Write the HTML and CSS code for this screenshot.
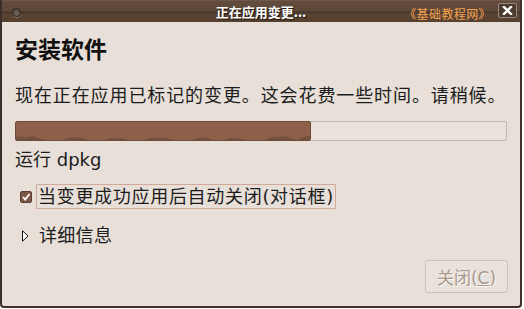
FILE: index.html
```html
<!DOCTYPE html>
<html lang="zh-CN">
<head>
<meta charset="utf-8">
<link rel="stylesheet" href="styles.css">
</head>
<body>
<div class="window">
  <div class="titlebar">
    <div class="tb-left"><span class="tb-circle"></span></div>
    <div class="tb-title">正在应用变更...</div>
    <div class="tb-right">
      <span class="tb-mark">《基础教程网》</span>
      <span class="tb-close"><svg width="11" height="9" viewBox="0 0 11 9"><path d="M2 1 L9 8 M9 1 L2 8" stroke="#fff" stroke-width="2.4" stroke-linecap="square"/></svg></span>
    </div>
  </div>
  <div class="content">
    <h1 class="heading">安装软件</h1>
    <p class="desc">现在正在应用已标记的变更。这会花费一些时间。请稍候。</p>
    <div class="progress">
      <div class="fill" style="width:60%">
        <svg class="bumps" viewBox="0 0 295 5" preserveAspectRatio="none"><path d="M0 5 L0 2 L5 1.5 L10 2.5 L18 1 L22 3 L30 5 L48 5 L52 3 L58 2 L66 2.5 L72 5 L90 5 L95 3 L108 3.5 L112 5 L130 5 L134 3 L150 2.8 L156 5 L178 5 L182 3 L192 2.5 L196 5 L210 5 L214 3 L225 3.5 L230 5 L250 5 L255 2.5 L262 2 L270 1 L275 3 L282 5 L288 2 L295 1 L295 5 Z" fill="#74503f"/></svg>
      </div>
    </div>
    <div class="status">运行 dpkg</div>
    <div class="check">
      <span class="box"><svg width="10" height="10" viewBox="0 0 10 10"><path d="M2 5 L4.2 7.5 L8.5 2" fill="none" stroke="#fff" stroke-width="1.8"/></svg></span>
      <span class="check-label">当变更成功应用后自动关闭(对话框)</span>
    </div>
    <div class="expander">
      <svg class="tri" width="7" height="12" viewBox="0 0 7 12"><path d="M0.5 0.8 L6 6 L0.5 11.2 Z" fill="#fff" stroke="#111" stroke-width="1"/></svg>
      <span>详细信息</span>
    </div>
    <div class="actions">
      <button class="btn" disabled>关闭(<u>C</u>)</button>
    </div>
  </div>
</div>
</body>
</html>
```
FILE: styles.css
```css
html, body {
  margin: 0;
  padding: 0;
  background: #ffffff;
}
body {
  font-family: "DejaVu Sans", "Noto Sans CJK SC", sans-serif;
  color: #1c1c1c;
}
.window {
  width: 518px;
  height: 306px;
  border-left: 2px solid #3d3029;
  border-right: 2px solid #3d3029;
  border-bottom: 2px solid #3d3029;
  border-radius: 0 0 4px 4px;
  background: #e7dfd8;
  display: flex;
  flex-direction: column;
  overflow: hidden;
}
.titlebar {
  height: 22px;
  margin: 0 -2px;
  background: linear-gradient(#7a6354 0px, #634c3e 1px, #5d4739 11px, #46352c 12px, #4a382e 13px, #584335 14px, #56412f 22px);
  display: grid;
  grid-template-columns: 1fr auto 1fr;
  align-items: center;
  flex: none;
}
.tb-left {
  display: flex;
  align-items: center;
  padding-left: 12px;
  padding-top: 3px;
}
.tb-circle {
  width: 7px;
  height: 7px;
  border-radius: 50%;
  border: 1px solid #2e241e;
  background: radial-gradient(circle at 50% 70%, #7a6a60, #4a3b32);
  box-shadow: 0 1px 0 #8a7264;
}
.tb-title {
  font-family: "Noto Sans CJK SC", sans-serif;
  font-weight: bold;
  font-size: 13px;
  line-height: 16px;
  color: #ffffff;
  text-shadow: 1px 1px 1px #1a120e;
  padding-top: 1px;
}
.tb-right {
  display: flex;
  justify-content: flex-end;
  align-items: center;
  gap: 7px;
  padding-right: 5px;
}
.tb-mark {
  font-family: "Noto Sans CJK SC", sans-serif;
  font-size: 12px;
  letter-spacing: 0.4px;
  line-height: 14px;
  color: #f7a34f;
  padding-top: 5px;
}
.tb-close {
  width: 17px;
  height: 13px;
  border: 1px solid #9a887d;
  border-radius: 2px;
  background: #4b3a30;
  display: flex;
  align-items: center;
  justify-content: center;
  margin-top: -1px;
}
.content {
  flex: 1;
  display: flex;
  flex-direction: column;
  padding: 0 13px;
}
.heading {
  margin: 12px 0 0;
  font-family: "Noto Sans CJK SC", sans-serif;
  font-size: 23px;
  line-height: 28px;
  font-weight: bold;
  color: #111;
}
.desc {
  margin: 22px 0 0;
  font-size: 18px;
  letter-spacing: 0.9px;
  line-height: 24px;
}
.progress {
  margin-top: 13px;
  height: 18px;
  border: 1px solid #c3b5ab;
  border-radius: 2px;
  background: #e9e1da;
}
.fill {
  height: 100%;
  margin: -1px;
  border: 1px solid #6e4b3a;
  border-radius: 2px;
  background: #8f6049;
  display: flex;
  flex-direction: column;
  justify-content: flex-end;
}
.bumps {
  display: block;
  width: 100%;
  height: 5px;
}
.status {
  margin-top: 7px;
  font-size: 18px;
  line-height: 24px;
}
.check {
  margin-top: 12px;
  display: flex;
  align-items: center;
  gap: 4px;
  padding-left: 5px;
}
.box {
  width: 10px;
  height: 10px;
  border: 1px solid #5b3e31;
  border-radius: 2px;
  background: #7e5646;
  display: flex;
  align-items: center;
  justify-content: center;
}
.check-label {
  font-size: 18px;
  letter-spacing: 0.7px;
  line-height: 23px;
  border: 1px solid #d2a898;
  border-radius: 1px;
  padding: 0 1px;
}
.expander {
  margin-top: 15px;
  display: flex;
  align-items: center;
  gap: 10px;
  padding-left: 7px;
  font-size: 18px;
  letter-spacing: 0.3px;
  line-height: 24px;
}
.actions {
  margin-top: auto;
  margin-bottom: 13px;
  display: flex;
  justify-content: flex-end;
}
.btn {
  width: 83px;
  height: 33px;
  margin-right: -1px;
  border: 1px solid #cdc1b8;
  border-radius: 3px;
  background: #e9e2dc;
  font-family: "DejaVu Sans", "Noto Sans CJK SC", sans-serif;
  font-size: 17px;
  color: #a8988c;
  text-shadow: 1px 1px 0 #fbf8f5;
  padding: 0;
}
```
